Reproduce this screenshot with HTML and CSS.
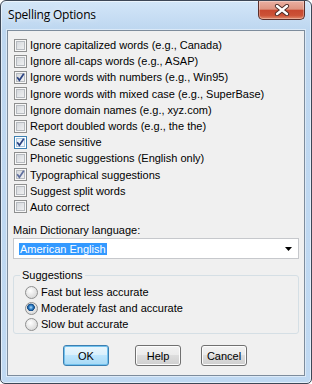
FILE: index.html
```html
<!DOCTYPE html>
<html lang="en">
<head>
  <meta charset="UTF-8">
  <title>Spelling Options</title>
  <link rel="stylesheet" href="styles.css">
</head>
<body>

  <div class="window">
    <div class="titlebar">
      <span class="title">Spelling Options</span>
      <span class="close">
        <svg width="16" height="12" viewBox="0 0 16 12">
          <path d="M3 2 L13 10 M13 2 L3 10" stroke="#4a2a26" stroke-width="4.2" stroke-linecap="round"/>
          <path d="M3 2 L13 10 M13 2 L3 10" stroke="#fff" stroke-width="2.4" stroke-linecap="round"/>
        </svg>
      </span>
    </div>

    <div class="client">
      <ul class="checks">
        <li class="row"><span class="box"></span>Ignore capitalized words (e.g., Canada)</li>
        <li class="row"><span class="box"></span>Ignore all-caps words (e.g., ASAP)</li>
        <li class="row"><span class="box"><svg class="tick" width="11" height="11" viewBox="0 0 11 11"><path d="M2.2 5.2 L4.4 8.2 L8.8 1.8"/></svg></span>Ignore words with numbers (e.g., Win95)</li>
        <li class="row"><span class="box"></span>Ignore words with mixed case (e.g., SuperBase)</li>
        <li class="row"><span class="box"></span>Ignore domain names (e.g., xyz.com)</li>
        <li class="row"><span class="box"></span>Report doubled words (e.g., the the)</li>
        <li class="row"><span class="box focus"><svg class="tick" width="11" height="11" viewBox="0 0 11 11"><path d="M2.2 5.2 L4.4 8.2 L8.8 1.8"/></svg></span>Case sensitive</li>
        <li class="row"><span class="box"></span>Phonetic suggestions (English only)</li>
        <li class="row"><span class="box"><svg class="tick light" width="11" height="11" viewBox="0 0 11 11"><path d="M2.2 5.2 L4.4 8.2 L8.8 1.8"/></svg></span>Typographical suggestions</li>
        <li class="row"><span class="box"></span>Suggest split words</li>
        <li class="row"><span class="box"></span>Auto correct</li>
      </ul>

      <div class="field-label">Main Dictionary language:</div>
      <div class="combo">
        <span class="combo-value">American English</span>
        <svg class="combo-arrow" width="7" height="4" viewBox="0 0 7 4"><path d="M0 0 H7 L3.5 4 Z" fill="#000"/></svg>
      </div>

      <fieldset class="group">
        <legend>Suggestions</legend>
        <div class="radio-row"><span class="radio"></span>Fast but less accurate</div>
        <div class="radio-row"><span class="radio on"></span>Moderately fast and accurate</div>
        <div class="radio-row"><span class="radio"></span>Slow but accurate</div>
      </fieldset>

      <div class="buttons">
        <button class="btn btn-default">OK</button>
        <button class="btn btn-help">Help</button>
        <button class="btn btn-cancel">Cancel</button>
      </div>
    </div>
  </div>

</body>
</html>
```

FILE: styles.css
```css
* {
  box-sizing: border-box;
}

body {
  margin: 0;
  font-family: "Liberation Sans", Arial, sans-serif;
  font-size: 11px;
  color: #000;
  background: #fff;
}

.window {
  width: 312px;
  height: 384px;
  border: 1px solid #3d4756;
  border-radius: 6px 6px 5px 5px;
  padding: 0 6px 7px;
  display: flex;
  flex-direction: column;
  background: linear-gradient(to bottom, #d3e6f8 0, #bed7f0 28px, #c0d9f2 100%);
  box-shadow: inset 0 0 0 1px rgba(255,255,255,0.55);
}

.titlebar {
  height: 29px;
  flex-shrink: 0;
  display: flex;
  justify-content: space-between;
  align-items: flex-start;
}

.title {
  font-family: "Open Sans", "Noto Sans", sans-serif;
  font-size: 12px;
  line-height: 16px;
  margin: 6px 0 0 1px;
  letter-spacing: -0.2px;
  color: #000;
  text-shadow: 0 0 6px rgba(255,255,255,0.9);
}

.close {
  width: 47px;
  height: 19px;
  display: flex;
  align-items: center;
  justify-content: center;
  border: 1px solid #5b2f2a;
  border-top: none;
  border-radius: 0 0 5px 5px;
  background: linear-gradient(to bottom, #eab0a2 0%, #de9481 45%, #c8482f 52%, #cc5237 80%, #e28b6c 100%);
  box-shadow: inset 0 0 0 1px rgba(255,255,255,0.3);
}

.client {
  flex: 1;
  border: 1px solid #7d8c9c;
  background: #f0f0f0;
  padding: 6px 5px 0 5px;
  box-shadow: 0 0 0 1px rgba(255,255,255,0.45);
}

.checks {
  list-style: none;
  margin: 0;
  padding: 0 0 0 1px;
}

.row {
  display: flex;
  align-items: center;
  height: 16.2px;
}

.box {
  width: 13px;
  height: 13px;
  margin-right: 3px;
  flex-shrink: 0;
  border: 1px solid #8e8f8f;
  background: linear-gradient(135deg, #cfd3d8, #f6f6f6);
  box-shadow: inset 0 0 0 1px #f7f7f7, inset 0 0 0 2px #b7bbc0;
  display: flex;
}

.box.focus {
  border-color: #3c7fb1;
  background: linear-gradient(135deg, #e0ecf6, #fafcfe);
  box-shadow: inset 0 0 0 1px #fff, inset 0 0 0 2px #a5c4e0;
}

.tick path {
  fill: none;
  stroke: #2a4282;
  stroke-width: 1.7;
}

.tick.light path {
  stroke: #5f6f9e;
}

.field-label {
  margin-top: 8px;
  line-height: 14px;
}

.combo {
  margin-top: 1px;
  height: 21px;
  border: 1px solid #c6c8cc;
  background: #fff;
  display: flex;
  align-items: center;
  padding: 0 6px 0 5px;
}

.combo-value {
  background: #3399ff;
  color: #fff;
  line-height: 12px;
  padding: 0 1px;
}

.combo-arrow {
  margin-left: auto;
}

.group {
  margin: 9px 0 0 0;
  min-width: 0;
  border: 1px solid #d5dfe5;
  border-radius: 3px;
  padding: 2px 0 1px 11px;
}

.group legend {
  padding: 0 2px;
  margin-left: -5px;
  line-height: 14px;
}

.radio-row {
  display: flex;
  align-items: center;
  height: 16px;
}

.radio {
  width: 13px;
  height: 13px;
  margin-right: 3px;
  flex-shrink: 0;
  border-radius: 50%;
  border: 1px solid #8e8f8f;
  background: radial-gradient(circle at 40% 35%, #ffffff 0, #e8e8e8 45%, #cfcfcf 100%);
}

.radio.on {
  background:
    radial-gradient(circle at 45% 40%, #b8e0fb 0, #3a8ad0 1.8px, #16518f 3.2px, #1d4f82 3.6px, transparent 4.1px),
    radial-gradient(circle at 40% 35%, #ffffff 0, #e8e8e8 45%, #cfcfcf 100%);
}

.buttons {
  display: flex;
  margin-top: 11px;
  padding-left: 50px;
}

.btn {
  width: 46px;
  height: 21px;
  padding: 0;
  border: 1px solid #707070;
  border-radius: 3px;
  font-family: "Liberation Sans", Arial, sans-serif;
  font-size: 11px;
  color: #000;
  background: linear-gradient(to bottom, #f2f2f2 0%, #ebebeb 50%, #dddddd 50%, #cfcfcf 100%);
  box-shadow: inset 0 0 0 1px #fcfcfc;
}

.btn-default {
  border-color: #3c7fb1;
  background: linear-gradient(to bottom, #eaf6fd 0%, #d9f0fc 50%, #bee6fd 50%, #a7d9f5 100%);
  box-shadow: inset 0 0 0 1px #72c2ee;
}

.btn-help {
  margin-left: 26px;
}

.btn-cancel {
  margin-left: 20px;
}
```
